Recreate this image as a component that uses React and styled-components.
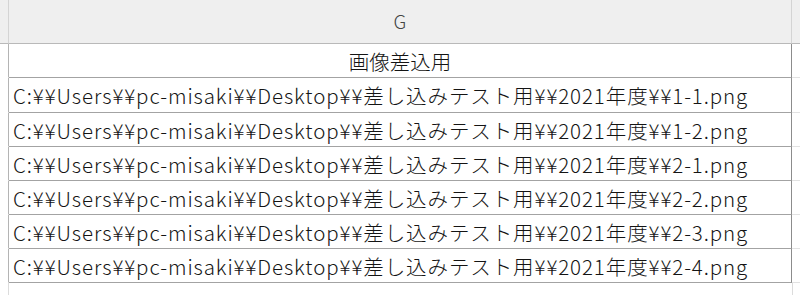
import styled, { createGlobalStyle } from 'styled-components';

const GlobalStyle = createGlobalStyle`
  html, body {
    margin: 0;
    padding: 0;
    background: #ffffff;
  }
  body {
    font-family: "Noto Sans CJK JP", "Noto Sans", sans-serif;
    color: #141414;
    overflow: hidden;
  }
`;

const Sheet = styled.div`
  width: 800px;
  height: 295px;
  display: flex;
  flex-direction: column;
`;

const Row = styled.div`
  display: flex;
  height: ${(p) => p.$height}px;
`;

const Stub = styled.div`
  width: 8px;
  flex-shrink: 0;
  background: ${(p) => (p.$head ? '#efefef' : '#ffffff')};
  border-right: 1px solid ${(p) => (p.$head ? '#d4d4d4' : '#b4b4b4')};
  border-bottom: 1px solid ${(p) => (p.$head ? '#b9b9b9' : 'transparent')};
`;

const Tail = styled.div`
  flex: 1;
  background: ${(p) => (p.$head ? '#efefef' : '#ffffff')};
  border-bottom: 1px solid ${(p) => (p.$head ? '#b9b9b9' : '#e2e2e2')};
`;

const HeadCell = styled.div`
  width: 783px;
  flex-shrink: 0;
  background: #efefef;
  border-right: 1px solid #d4d4d4;
  border-bottom: 1px solid #b9b9b9;
  display: flex;
  align-items: center;
  justify-content: center;
  font-size: 19px;
  font-weight: 300;
  color: #444444;
  padding-bottom: 3px;
  box-sizing: border-box;
`;

const Cell = styled.div`
  width: 783px;
  flex-shrink: 0;
  border-right: 1px solid #8c8c8c;
  border-bottom: 1px solid #a3a3a3;
  display: flex;
  align-items: center;
  justify-content: ${(p) => (p.$center ? 'center' : 'flex-start')};
  padding-left: ${(p) => (p.$center ? 0 : 4)}px;
  box-sizing: border-box;
  font-size: 20.5px;
  font-weight: 300;
  letter-spacing: ${(p) => (p.$center ? 0 : 0.9)}px;
  white-space: nowrap;
  overflow: hidden;
`;

const Below = styled.div`
  flex: 1;
  display: flex;
`;

const BelowStub = styled.div`
  width: 8px;
  border-right: 1px solid #dcdcdc;
`;

const BelowMain = styled.div`
  width: 783px;
  border-right: 1px solid #dcdcdc;
`;

const files = ['1-1', '1-2', '2-1', '2-2', '2-3', '2-4'];

export default function App() {
  return (
    <Sheet>
      <GlobalStyle />
      <Row $height={44}>
        <Stub $head />
        <HeadCell>G</HeadCell>
        <Tail $head />
      </Row>
      <Row $height={34}>
        <Stub />
        <Cell $center>画像差込用</Cell>
        <Tail />
      </Row>
      {files.map((f, i) => (
        <Row key={f} $height={i === 0 ? 35 : 34}>
          <Stub />
          <Cell>{`C:¥¥Users¥¥pc-misaki¥¥Desktop¥¥差し込みテスト用¥¥2021年度¥¥${f}.png`}</Cell>
          <Tail />
        </Row>
      ))}
      <Below>
        <BelowStub />
        <BelowMain />
      </Below>
    </Sheet>
  );
}
